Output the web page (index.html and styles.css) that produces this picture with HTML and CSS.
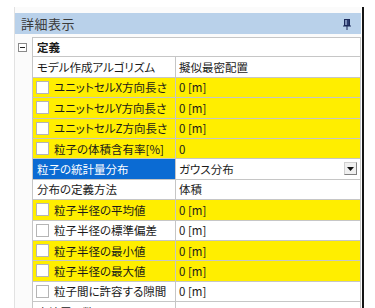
FILE: index.html
```html
<!DOCTYPE html>
<html lang="ja">
<head>
<meta charset="utf-8">
<link rel="stylesheet" href="styles.css">
</head>
<body>
<div class="window">
  <div class="panel">
    <div class="titlebar">
      <span class="title">詳細表示</span>
      <svg class="pin" width="8" height="11" viewBox="0 0 8 11">
        <rect x="1.5" y="0.5" width="5" height="6" fill="#7d8fb8" stroke="#1c2a5a"/>
        <rect x="4" y="1" width="2" height="5" fill="#2c3c70"/>
        <line x1="0" y1="7" x2="8" y2="7" stroke="#1c2a5a"/>
        <line x1="4" y1="7" x2="4" y2="11" stroke="#1c2a5a"/>
      </svg>
    </div>
    <div class="grid">
      <div class="row cat">
        <div class="gutter"><span class="expander"></span></div>
        <div class="catlabel">定義</div>
      </div>
      <div class="row">
        <div class="gutter"></div>
        <div class="label">モデル作成アルゴリズム</div>
        <div class="value">擬似最密配置</div>
      </div>
      <div class="row req">
        <div class="gutter"></div>
        <div class="label"><span class="check"></span>ユニットセルX方向長さ</div>
        <div class="value">0 [m]</div>
      </div>
      <div class="row req">
        <div class="gutter"></div>
        <div class="label"><span class="check"></span>ユニットセルY方向長さ</div>
        <div class="value">0 [m]</div>
      </div>
      <div class="row req">
        <div class="gutter"></div>
        <div class="label"><span class="check"></span>ユニットセルZ方向長さ</div>
        <div class="value">0 [m]</div>
      </div>
      <div class="row req">
        <div class="gutter"></div>
        <div class="label"><span class="check"></span>粒子の体積含有率[%]</div>
        <div class="value">0</div>
      </div>
      <div class="row sel">
        <div class="gutter"></div>
        <div class="label">粒子の統計量分布</div>
        <div class="value dropdown">ガウス分布<span class="ddbtn"><svg width="7" height="4" viewBox="0 0 7 4"><path d="M0 0H7L3.5 4Z" fill="#111"/></svg></span></div>
      </div>
      <div class="row">
        <div class="gutter"></div>
        <div class="label">分布の定義方法</div>
        <div class="value">体積</div>
      </div>
      <div class="row req">
        <div class="gutter"></div>
        <div class="label"><span class="check"></span>粒子半径の平均値</div>
        <div class="value">0 [m]</div>
      </div>
      <div class="row">
        <div class="gutter"></div>
        <div class="label"><span class="check"></span>粒子半径の標準偏差</div>
        <div class="value">0 [m]</div>
      </div>
      <div class="row req">
        <div class="gutter"></div>
        <div class="label"><span class="check"></span>粒子半径の最小値</div>
        <div class="value">0 [m]</div>
      </div>
      <div class="row req">
        <div class="gutter"></div>
        <div class="label"><span class="check"></span>粒子半径の最大値</div>
        <div class="value">0 [m]</div>
      </div>
      <div class="row">
        <div class="gutter"></div>
        <div class="label"><span class="check"></span>粒子間に許容する隙間</div>
        <div class="value">0 [m]</div>
      </div>
      <div class="row">
        <div class="gutter"></div>
        <div class="label">充填層の数</div>
        <div class="value">0</div>
      </div>
    </div>
  </div>
</div>
</body>
</html>
```
FILE: styles.css
```css
html, body {
  margin: 0;
  padding: 0;
  background: #ffffff;
  overflow: hidden;
}
body {
  font-family: "Noto Sans CJK JP", "Noto Sans", sans-serif;
  font-size: 11.5px;
  color: #1a1a1a;
  font-feature-settings: "palt";
}
.window {
  margin-left: 14px;
  margin-top: 7px;
  width: 348px;
  height: 301px;
  border-right: 2px solid #151515;
  overflow: hidden;
}
.panel {
  padding-top: 6px;
  border-left: 1px solid #e2e2e2;
  width: 346px;
  height: 100%;
  background: #fbfbfb;
}
.titlebar {
  height: 21px;
  background: #b9d1ea;
  display: flex;
  align-items: center;
  justify-content: space-between;
  padding: 0 10px 0 6px;
}
.title {
  font-size: 13px;
  color: #3a3a3a;
  letter-spacing: 0.5px;
}
.pin {
  display: block;
  margin-top: 1px;
}
.grid {
  margin-top: 3px;
}
.row {
  display: flex;
  height: 20.4px;
}
.gutter {
  width: 17px;
  flex: none;
  position: relative;
}
.label, .value, .catlabel {
  box-sizing: border-box;
  border-bottom: 1px solid #c6c6c6;
  display: flex;
  align-items: center;
  white-space: nowrap;
  overflow: hidden;
}
.label {
  width: 144px;
  flex: none;
  border-left: 1px solid #c6c6c6;
  border-right: 1px solid #c6c6c6;
  padding-left: 4px;
  background: #ffffff;
}
.value {
  flex: 1;
  border-right: 1px solid #c6c6c6;
  padding-left: 3px;
  background: #ffffff;
}
.cat .catlabel {
  flex: 1;
  border: 1px solid #c6c6c6;
  padding-left: 4px;
  font-weight: bold;
  background: #ffffff;
}
.expander {
  position: absolute;
  left: 3px;
  top: 6px;
  width: 7px;
  height: 7px;
  border: 1px solid #8a8a8a;
  background: #ffffff;
}
.expander::after {
  content: "";
  position: absolute;
  left: 1px;
  top: 3px;
  width: 5px;
  height: 1px;
  background: #222;
}
.check {
  width: 13px;
  height: 13px;
  box-sizing: border-box;
  border: 1px solid #b5b5b5;
  background: #ffffff;
  margin-right: 5px;
  margin-left: -1px;
  flex: none;
}
.req .label, .req .value {
  background: #ffee00;
}
.sel .label {
  background: #0b6bd3;
  color: #ffffff;
}
.dropdown {
  position: relative;
}
.ddbtn {
  position: absolute;
  right: 3px;
  top: 3px;
  width: 13px;
  height: 13px;
  box-sizing: border-box;
  border: 1px solid #d0d0d0;
  border-right-color: #808080;
  border-bottom-color: #808080;
  background: #f0f0f0;
  display: flex;
  align-items: center;
  justify-content: center;
}
.ddbtn svg {
  display: block;
}
```
